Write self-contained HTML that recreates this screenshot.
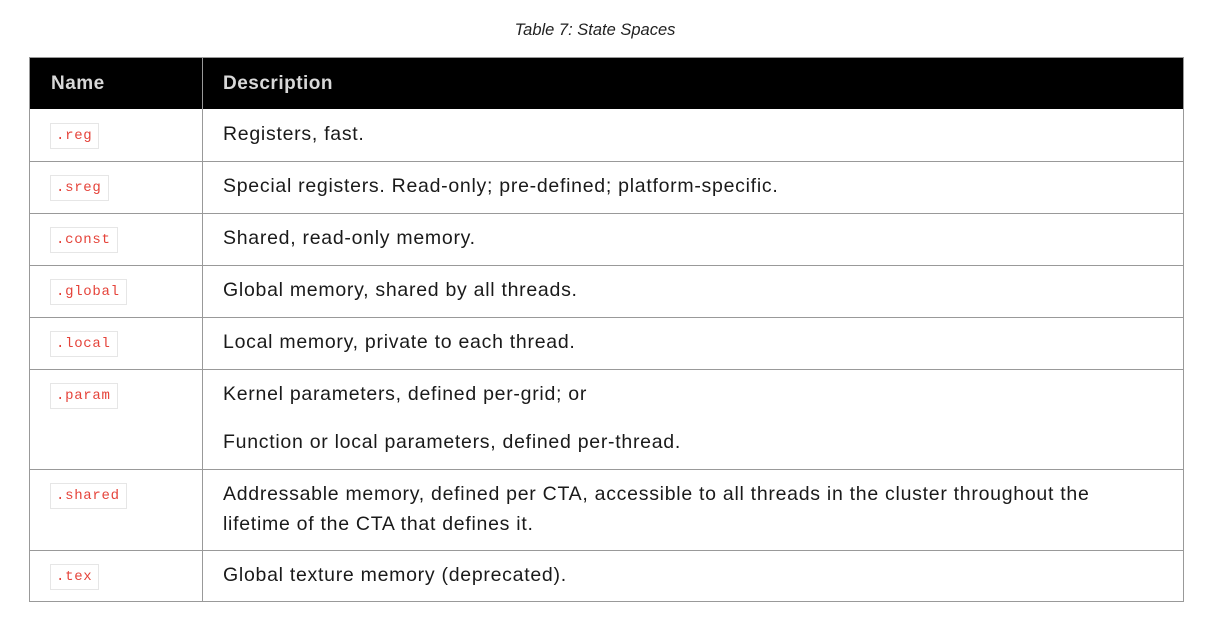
<!DOCTYPE html>
<html><head><meta charset="utf-8"><style>
body{margin:0;width:1214px;height:641px;background:#fff;position:relative;font-family:"Liberation Sans",sans-serif;overflow:hidden}
.cap{position:absolute;top:21px;left:-12px;width:1214px;text-align:center;font-style:italic;font-size:16.5px;color:#222}
.t{position:absolute;left:29px;top:57px;width:1153px;height:543px;border:1px solid #999;box-sizing:content-box}
.hd{position:absolute;left:0;top:0;width:1153px;height:51px;background:#000}
.hd span{position:absolute;top:15px;font-weight:bold;font-size:19px;color:#d8d8d8;letter-spacing:0.5px}
.vl{position:absolute;left:172px;top:0;width:1px;height:543px;background:#999}
.hl{position:absolute;left:0;width:1153px;height:1px;background:#999}
.c{position:absolute;left:20px;font-family:"Liberation Mono",monospace;font-size:14px;color:#e5433a;border:1px solid #e6e6e6;padding:3px 6px 3px 5px;line-height:18px;letter-spacing:0.7px}
.d{position:absolute;left:193px;font-size:19.5px;color:#1a1a1a;line-height:30px;width:950px;letter-spacing:0.72px}
</style></head><body>
<div class="cap">Table 7: State Spaces</div>
<div class="t">
<div class="hd"><span style="left:21px">Name</span><span style="left:193px">Description</span></div>
<div class="vl"></div>
<div class="hl" style="top:103px"></div>
<div class="hl" style="top:155px"></div>
<div class="hl" style="top:207px"></div>
<div class="hl" style="top:259px"></div>
<div class="hl" style="top:311px"></div>
<div class="hl" style="top:411px"></div>
<div class="hl" style="top:492px"></div>

<div class="c" style="top:65px">.reg</div><div class="d" style="top:61px">Registers, fast.</div>
<div class="c" style="top:117px">.sreg</div><div class="d" style="top:113px">Special registers. Read-only; pre-defined; platform-specific.</div>
<div class="c" style="top:169px">.const</div><div class="d" style="top:165px">Shared, read-only memory.</div>
<div class="c" style="top:221px">.global</div><div class="d" style="top:217px">Global memory, shared by all threads.</div>
<div class="c" style="top:273px">.local</div><div class="d" style="top:269px">Local memory, private to each thread.</div>
<div class="c" style="top:325px">.param</div><div class="d" style="top:321px">Kernel parameters, defined per-grid; or</div><div class="d" style="top:369px">Function or local parameters, defined per-thread.</div>
<div class="c" style="top:425px">.shared</div><div class="d" style="top:421px">Addressable memory, defined per CTA, accessible to all threads in the cluster throughout the<br>lifetime of the CTA that defines it.</div>
<div class="c" style="top:506px">.tex</div><div class="d" style="top:502px">Global texture memory (deprecated).</div>
</div>
</body></html>
